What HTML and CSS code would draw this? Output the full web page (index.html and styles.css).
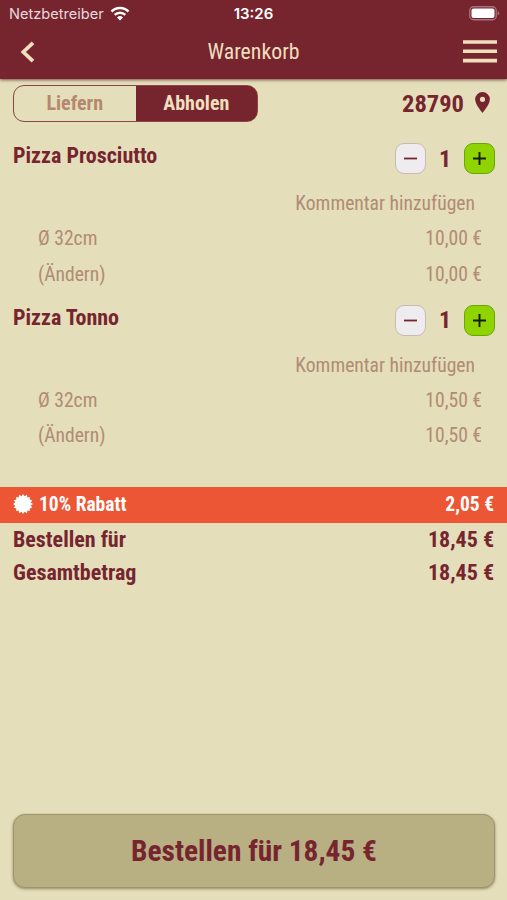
FILE: index.html
```html
<!DOCTYPE html>
<html lang="de">
<head>
<meta charset="utf-8">
<title>Warenkorb</title>
<link rel="stylesheet" href="styles.css">
</head>
<body>
<header class="header">
  <div class="status">
    <div class="carrier"><span>Netzbetreiber</span>
      <svg width="20" height="15" viewBox="0 0 20 15"><g fill="none" stroke="#fff" stroke-width="2.5"><path d="M1.5 5.5a12 12 0 0 1 17 0"/><path d="M4.7 8.9a7.5 7.5 0 0 1 10.6 0"/></g><path d="M10 14.5l-3-3.1a4.3 4.3 0 0 1 6 0z" fill="#fff"/></svg>
    </div>
    <span class="clock">13:26</span>
    <svg class="battery" width="31" height="15" viewBox="0 0 31 15"><rect x=".75" y=".75" width="26.5" height="13" rx="3.8" fill="none" stroke="#a8737c" stroke-width="1.3"/><rect x="2.5" y="2.5" width="23" height="9.5" rx="2" fill="#fff"/><path d="M28.7 5v4.5q1.6-.8 1.6-2.2t-1.6-2.3z" fill="#a8737c"/></svg>
  </div>
  <nav class="nav">
    <svg class="back" width="16" height="22" viewBox="0 0 16 22"><path d="M13 1.8L3.3 11l9.7 9.2" fill="none" stroke="#f0dfbd" stroke-width="3.7"/></svg>
    <h1 class="title">Warenkorb</h1>
    <svg class="menu" width="34" height="23" viewBox="0 0 34 23"><path d="M0 2h34M0 11.3h34M0 20.6h34" stroke="#f0dfbd" stroke-width="3.6"/></svg>
  </nav>
</header>
<main class="main">
  <div class="options">
    <div class="toggle"><span class="choice">Liefern</span><span class="choice active">Abholen</span></div>
    <div class="zip"><span>28790</span><svg class="pin" width="15" height="21" viewBox="0 0 14 20"><path fill-rule="evenodd" d="M7 0a7 7 0 0 0-7 7c0 5.2 7 13 7 13s7-7.8 7-13a7 7 0 0 0-7-7zm0 4.500a2.500 2.500 0 1 1 0 5 2.500 2.500 0 0 1 0-5z" fill="#76252f"/></svg></div>
  </div>
  <section class="item">
    <div class="item-head"><h2>Pizza Prosciutto</h2>
      <div class="stepper"><button class="step"><svg width="15" height="15" viewBox="0 0 15 15"><path d="M1 7.500h13" stroke="#76252f" stroke-width="1.800"/></svg></button><span class="count">1</span><button class="step plus"><svg width="15" height="15" viewBox="0 0 15 15"><path d="M1 7.500h13M7.500 1v13" stroke="#121c08" stroke-width="1.900"/></svg></button></div></div>
    <div class="comment">Kommentar hinzufügen</div>
    <div class="line"><span>Ø 32cm</span><span>10,00 €</span></div>
    <div class="line"><span>(Ändern)</span><span>10,00 €</span></div>
  </section>
  <section class="item">
    <div class="item-head"><h2>Pizza Tonno</h2>
      <div class="stepper"><button class="step"><svg width="15" height="15" viewBox="0 0 15 15"><path d="M1 7.500h13" stroke="#76252f" stroke-width="1.800"/></svg></button><span class="count">1</span><button class="step plus"><svg width="15" height="15" viewBox="0 0 15 15"><path d="M1 7.500h13M7.500 1v13" stroke="#121c08" stroke-width="1.900"/></svg></button></div></div>
    <div class="comment">Kommentar hinzufügen</div>
    <div class="line"><span>Ø 32cm</span><span>10,50 €</span></div>
    <div class="line"><span>(Ändern)</span><span>10,50 €</span></div>
  </section>
  <div class="discount"><svg width="20" height="20" viewBox="-10 -10 20 20"><path fill="#fff" d="M10 0L7.750 1.540 9.240 3.830 6.570 4.390 7.070 7.070 4.390 6.570 3.830 9.240 1.540 7.750 0 10-1.540 7.750-3.830 9.240-4.390 6.570-7.070 7.070-6.570 4.390-9.240 3.830-7.750 1.540-10 0-7.750-1.540-9.240-3.830-6.570-4.390-7.070-7.070-4.390-6.570-3.830-9.240-1.540-7.750 0-10 1.540-7.750 3.830-9.240 4.390-6.570 7.070-7.070 6.570-4.390 9.240-3.830 7.750-1.540z"/></svg><span class="discount-name">10% Rabatt</span><span>2,05 €</span></div>
  <div class="sum"><span>Bestellen für</span><span>18,45 €</span></div>
  <div class="sum"><span>Gesamtbetrag</span><span>18,45 €</span></div>
</main>
<footer class="footer"><button class="order">Bestellen für 18,45 €</button></footer>
</body>
</html>
```
FILE: styles.css
```css
* { box-sizing: border-box; }
body {
  margin: 0;
  height: 900px;
  display: flex;
  flex-direction: column;
  background: #e4debb;
  color: #76252f;
  font-family: "Roboto Condensed", Roboto, sans-serif;
  font-stretch: 75%;
  overflow: hidden;
}
button { font: inherit; color: inherit; padding: 0; }
svg { display: block; flex: none; }
h1, h2 { margin: 0; }
.header {
  height: 79px;
  background: #76252f;
  box-shadow: 0 1px 3px rgba(60, 20, 20, .7);
}
.status {
  height: 26px;
  padding: 0 8px 0 9px;
  display: grid;
  grid-template-columns: 1fr auto 1fr;
  align-items: center;
  color: #fff;
  font: 14.6px/26px Inter, sans-serif;
  font-stretch: 100%;
}
.carrier { display: flex; align-items: center; gap: 6px; color: #e9d9dc; }
.carrier span { padding-top: 1px; }
.clock { padding: 1px 1px 0 0; font-size: 15px; font-weight: 600; }
.battery { justify-self: end; margin-right: -1px; }
.nav {
  height: 51px;
  padding: 0 10px;
  display: grid;
  grid-template-columns: 1fr auto 1fr;
  align-items: center;
}
.back { margin-left: 10px; }
.title { color: #f0dfbd; font-size: 21.8px; font-weight: 400; }
.menu { justify-self: end; }
.main { flex: 1; }
.options {
  height: 50px;
  padding: 6px 17px 0 13px;
  display: flex;
  justify-content: space-between;
  align-items: flex-start;
}
.toggle {
  width: 245px;
  height: 37px;
  display: flex;
  border: 1.5px solid #8b4544;
  border-radius: 11px;
  overflow: hidden;
  background: linear-gradient(90deg, transparent 50%, #76252f 50%);
  font-size: 20px;
  font-weight: 700;
  line-height: 34px;
  text-align: center;
}
.choice { flex: 1; color: #b5876f; }
.active { background: #76252f; color: #f0dfbd; }
.zip { display: flex; align-items: center; gap: 11px; font-size: 24.5px; font-weight: 700; line-height: 37px; }
.pin { margin-top: -3px; }
.item { height: 161.5px; }
.item-head { height: 57px; padding: 14px 12px 0 13px; display: flex; justify-content: space-between; }
h2 { font-size: 22px; font-weight: 700; line-height: 26px; }
.stepper { height: 31px; display: flex; align-items: center; }
.step {
  width: 31px;
  height: 31px;
  display: grid;
  place-items: center;
  background: #eeecef;
  border: 1px solid #c9b8b5;
  border-radius: 9px;
}
.plus { background: #8fd400; border-color: #69a50c; }
.count { width: 38px; text-align: center; font-size: 24px; font-weight: 700; }
.comment, .line { color: #b18b74; font-size: 19.6px; line-height: 35.3px; }
.comment { padding-right: 32px; text-align: right; }
.line { display: flex; justify-content: space-between; padding: 0 25px 0 38px; }
.discount {
  height: 36.5px;
  margin: 34.5px 0 -.5px;
  padding: 0 13px 1px 13px;
  display: flex;
  align-items: center;
  background: #ec5634;
  color: #fff;
  font-size: 19.5px;
  font-weight: 700;
}
.discount-name { flex: 1; margin-left: 6px; }
.sum { display: flex; justify-content: space-between; padding: 0 13px; font-size: 22px; font-weight: 700; line-height: 33.5px; }
.footer { padding: 0 12px 12px 13px; }
.order {
  display: block;
  width: 100%;
  height: 74px;
  border: 1.5px solid #9e936d;
  border-radius: 12px;
  background: #b8b083;
  box-shadow: 0 1px 3px rgba(90, 80, 40, .6);
  font-size: 29.4px;
  font-weight: 700;
}
```
